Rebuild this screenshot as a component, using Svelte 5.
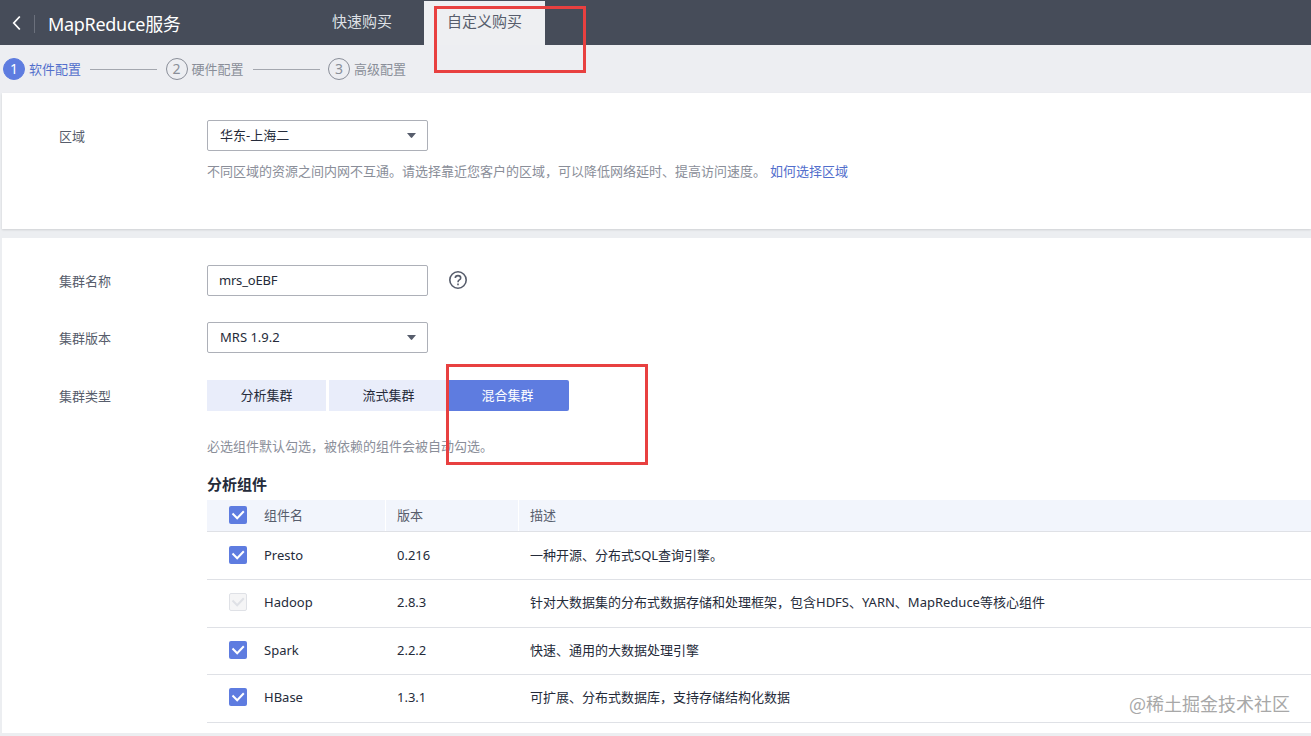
<script>
    const tabs = [
        { label: '快速购买', active: false },
        { label: '自定义购买', active: true },
    ];

    const steps = ['软件配置', '硬件配置', '高级配置'];

    const clusterTypes = ['分析集群', '流式集群', '混合集群'];

    const components = [
        {
            name: 'Presto',
            version: '0.216',
            desc: '一种开源、分布式SQL查询引擎。'
        },
        {
            name: 'Hadoop',
            version: '2.8.3',
            desc: '针对大数据集的分布式数据存储和处理框架，包含HDFS、YARN、MapReduce等核心组件',
            required: true
        },
        {
            name: 'Spark',
            version: '2.2.2',
            desc: '快速、通用的大数据处理引擎'
        },
        {
            name: 'HBase',
            version: '1.3.1',
            desc: '可扩展、分布式数据库，支持存储结构化数据'
        },
    ];

    let step = 0;
    let clusterType = '混合集群';
    let clusterName = 'mrs_oEBF';
</script>

<style>
    :global(body) {
        background: #eceef1;
    }

    .page {
        position: relative;
        width: 1311px;
        height: 736px;
        overflow: hidden;

        font-family: 'Noto Sans', 'Noto Sans CJK SC', sans-serif;
        font-size: 13px;
        line-height: 20px;
        color: #252b3a;
        background: #eceef1;
    }

    .topbar {
        display: flex;
        height: 45px;

        color: #fff;
        background: #464c59;
    }
    .back {
        width: 35px;
        height: 45px;
        flex: none;
    }
    .topbar h1 {
        width: 253px;
        margin: 0 0 0 13px;

        font-size: 18px;
        font-weight: 400;
        line-height: 48px;
        letter-spacing: -0.3px;
    }
    .tab {
        padding: 0 32px 0 31px;

        font-size: 15px;
        line-height: 43px;
        color: #dfe1e6;
    }
    .tab.active {
        margin-top: 1px;
        padding: 0 23px;

        line-height: 41px;
        color: #575d6c;
        background: #eeeff2;
    }

    .steps {
        display: flex;
        align-items: center;
        height: 48px;
        padding-left: 3px;

        color: #8a8e99;
        background: #edeef2;
    }
    .steps .num {
        display: flex;
        align-items: center;
        justify-content: center;
        box-sizing: border-box;
        width: 22px;
        height: 22px;
        margin-right: 4px;

        font-size: 14px;
        border: 1px solid #8a8e99;
        border-radius: 50%;
    }
    .steps .current {
        color: #526ecc;
    }
    .steps .current.num {
        color: #fff;
        background: #5e7ce0;
        border-color: #5e7ce0;
    }
    .steps .line {
        width: 67px;
        height: 1px;
        margin: 0 8.5px 0 9px;
        background: #a4a7af;
    }

    .card {
        box-sizing: border-box;
        margin-left: 2px;
        padding-left: 57px;

        background: #fff;
        box-shadow: 0 1px 2px rgba(0, 0, 0, 0.12);
    }
    .region {
        height: 136px;
        padding-top: 27px;
    }
    .cluster {
        height: 495px;
        margin-top: 9px;
        padding-top: 27px;
        box-shadow: none;
    }

    .row {
        display: flex;
        height: 31px;
        margin-bottom: 26px;
    }
    .row label, .row .label {
        width: 148px;
        flex: none;

        line-height: 32px;
        color: #575d6c;
    }
    .region .row, .row.types {
        margin-bottom: 0;
    }
    .row.types {
        margin-top: 27px;
    }

    .select, input {
        box-sizing: border-box;
        width: 221px;
        height: 31px;
        padding: 0 12px 1px;

        font: inherit;
        color: #252b3a;
        background: #fff;
        border: 1px solid #adb0b8;
        border-radius: 2px;
    }
    input {
        padding: 0 11px 1px;
        letter-spacing: -0.2px;
    }
    .select {
        display: flex;
        align-items: center;
        justify-content: space-between;
    }
    .select svg {
        width: 9px;
        height: 5px;
        margin: 1px -1px 0 0;
    }
    .help {
        width: 20px;
        height: 20px;
        margin: 5px 0 0 20px;
    }

    .hint {
        margin: 0 0 0 148px;
        color: #8a8e99;
    }
    .region .hint {
        margin-top: 10px;
    }
    .cluster .hint {
        margin-top: 25px;
    }
    .hint a {
        margin-left: 4px;
        color: #526ecc;
        text-decoration: none;
    }

    .types button {
        width: 119px;
        height: 31px;
        margin-right: 3px;
        padding: 0 0 2px;

        font: inherit;
        color: #252b3a;
        background: #e9edfa;
        border: 0;
    }
    .types button:nth-of-type(2) {
        margin-right: 0;
    }
    .types button.selected {
        width: 121px;
        padding-right: 2px;
        color: #fff;
        background: #5e7ce0;
        border-radius: 0 2px 2px 0;
    }

    h2 {
        margin: 18px 0 6px 148px;

        font-size: 15px;
        font-weight: 700;
        line-height: 20px;
    }

    .table {
        margin-left: 148px;
    }
    .tr {
        display: grid;
        grid-template-columns: 57px 122px 133px 1fr;
        align-items: center;
        box-sizing: border-box;
        height: 48px;
        padding-bottom: 3px;

        border-bottom: 1px solid #dfe1e6;
    }
    .tr:nth-child(2) {
        padding-bottom: 2px;
    }
    .tr:nth-child(4) {
        height: 47px;
        padding-bottom: 2px;
    }
    .tr.head {
        height: 32px;
        padding-bottom: 0;
        color: #575d6c;
        background: #f2f5fc;
    }
    .head span {
        line-height: 31px;
    }
    .head .sep {
        box-shadow: inset 1px 0 #fff;
    }
    .tr .check {
        width: 18px;
        height: 18px;
        margin-left: 22px;
    }
    .tr.head .check {
        margin-bottom: 1px;
    }
    .tr .sep {
        padding-left: 12px;
        margin-left: -1px;
    }

    .mark {
        position: absolute;
        box-sizing: border-box;
        border: 3px solid #e84040;
    }
    .mark.on-tab {
        left: 434px;
        top: 6px;
        width: 152px;
        height: 67px;
    }
    .mark.on-type {
        left: 446px;
        top: 364px;
        width: 202px;
        height: 101px;
    }
    .watermark {
        position: absolute;
        right: 21px;
        bottom: 19px;

        font-family: 'Noto Sans CJK SC', sans-serif;
        font-size: 18px;
        line-height: 28px;
        color: #a8a8a8;
    }
</style>

{#snippet checkbox(disabled)}
    <svg class="check" viewBox="0 0 18 18">
        {#if disabled}
            <rect x="0.5" y="0.5" width="17" height="17" rx="1.5" fill="#f5f5f6" stroke="#dfe1e6" />
        {:else}
            <rect width="18" height="18" rx="2" fill="#5e7ce0" />
        {/if}
        <path d="M3.5 7.5 L8.2 12.3 L14.8 5.3" fill="none" stroke={disabled ? '#dfe1e6' : '#fff'} stroke-width="2" />
    </svg>
{/snippet}

{#snippet arrow()}
    <svg viewBox="0 0 9 5"><path d="M0 0 H9 L5.2 4.6 Q4.5 5.2 3.8 4.6 Z" fill="#575d6c" /></svg>
{/snippet}

<div class="page">
    <div class="topbar">
        <svg class="back" viewBox="0 0 35 45">
            <path d="M19.8 16.5 L13.8 23 L19.8 29.5" fill="none" stroke="#fff" stroke-width="1.8" />
            <path d="M34.5 15 V33" stroke="#6b707c" />
        </svg>
        <h1>MapReduce服务</h1>
        {#each tabs as tab}
            <div class="tab" class:active={tab.active}>{tab.label}</div>
        {/each}
    </div>

    <div class="steps">
        {#each steps as label, i}
            {#if i > 0}
                <span class="line"></span>
            {/if}
            <span class="num" class:current={i === step}>{i + 1}</span>
            <span class:current={i === step}>{label}</span>
        {/each}
    </div>

    <div class="card region">
        <div class="row">
            <span class="label">区域</span>
            <div class="select"><span>华东-上海二</span>{@render arrow()}</div>
        </div>
        <p class="hint">不同区域的资源之间内网不互通。请选择靠近您客户的区域，可以降低网络延时、提高访问速度。<a href="#region">如何选择区域</a></p>
    </div>

    <div class="card cluster">
        <div class="row">
            <label for="name">集群名称</label>
            <input id="name" type="text" bind:value={clusterName}>
            <svg class="help" viewBox="0 0 20 20" fill="none" stroke="#575d6c" stroke-width="1.6">
                <circle cx="10" cy="10" r="8.2" />
                <path d="M7.3 8 Q7.3 5.6 10 5.6 Q12.7 5.6 12.7 7.9 Q12.7 9.1 11.3 9.9 Q10 10.7 10 12.2" />
                <path d="M10 13.6 V15.2" />
            </svg>
        </div>
        <div class="row">
            <span class="label">集群版本</span>
            <div class="select"><span>MRS 1.9.2</span>{@render arrow()}</div>
        </div>
        <div class="row types">
            <span class="label">集群类型</span>
            {#each clusterTypes as type}
                <button class:selected={type === clusterType} on:click={() => {clusterType = type}}>{type}</button>
            {/each}
        </div>
        <p class="hint">必选组件默认勾选，被依赖的组件会被自动勾选。</p>

        <h2>分析组件</h2>
        <div class="table">
            <div class="tr head">
                {@render checkbox(false)}
                <span>组件名</span>
                <span class="sep">版本</span>
                <span class="sep">描述</span>
            </div>
            {#each components as item}
                <div class="tr">
                    {@render checkbox(item.required)}
                    <span>{item.name}</span>
                    <span class="sep">{item.version}</span>
                    <span class="sep">{item.desc}</span>
                </div>
            {/each}
        </div>
    </div>

    <div class="mark on-tab"></div>
    <div class="mark on-type"></div>
    <div class="watermark">@稀土掘金技术社区</div>
</div>
